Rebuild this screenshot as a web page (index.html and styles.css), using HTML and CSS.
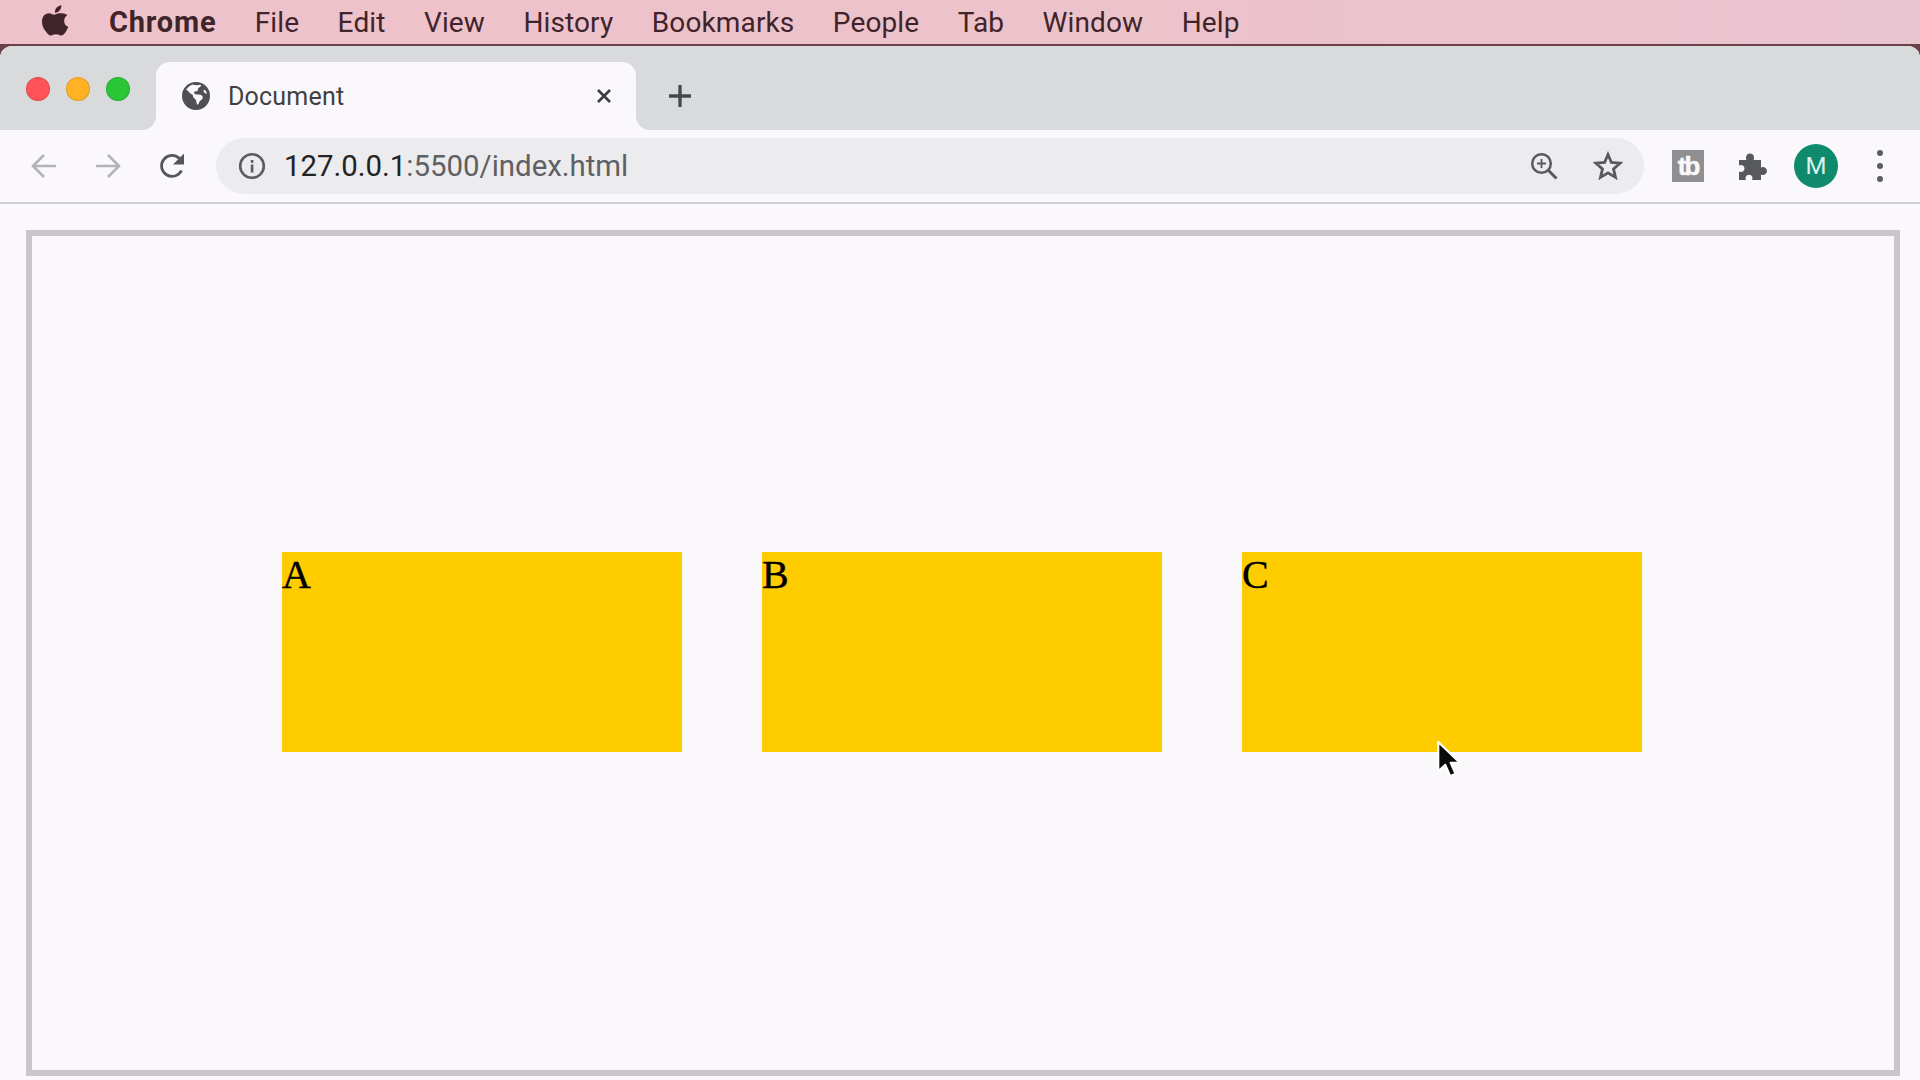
FILE: index.html
```html
<!DOCTYPE html>
<html lang="en">
<head>
<meta charset="utf-8">
<title>Document</title>
<link rel="stylesheet" href="styles.css">
</head>
<body>
<header class="menubar">
  <svg class="apple" viewBox="0 0 24 28" width="27" height="32" preserveAspectRatio="none" aria-hidden="true"><path d="M17.2 1c.1 2-.6 3.5-1.6 4.700-1 1.200-2.600 2.100-4.100 2-.2-1.800.6-3.500 1.600-4.600C14.200 1.900 15.800 1.100 17.200 1zM22.500 9.900c-1.700 1.100-2.800 2.800-2.800 4.900 0 2.500 1.500 4.300 3.600 5.200-.5 1.500-1.200 2.900-2.100 4.200-1.300 1.800-2.500 3.300-4.300 3.300-1.700 0-2.300-1-4.500-1-2.200 0-2.900 1-4.500 1-1.800.1-3.200-1.700-4.400-3.500C1 21.500 0 18.400 0 15.500c0-4.800 3.100-7.300 6.200-7.300 1.800 0 3.300 1.200 4.400 1.200 1.100 0 2.800-1.300 4.900-1.300 2.700 0 5.300 0 7 1.800z"/></svg>
  <nav class="menus">
    <span class="menu menu-app">Chrome</span>
    <span class="menu">File</span>
    <span class="menu">Edit</span>
    <span class="menu">View</span>
    <span class="menu">History</span>
    <span class="menu">Bookmarks</span>
    <span class="menu">People</span>
    <span class="menu">Tab</span>
    <span class="menu">Window</span>
    <span class="menu">Help</span>
  </nav>
</header>

<div class="window">
  <div class="tabstrip">
    <div class="lights">
      <span class="light light-red"></span>
      <span class="light light-yellow"></span>
      <span class="light light-green"></span>
    </div>
    <div class="tab">
      <svg class="globe" viewBox="0 0 28 28" width="28" height="28" aria-hidden="true">
        <circle cx="14" cy="14" r="14" fill="#4f5052"/>
        <path fill="#faf8fb" d="M10.500 2.600c2.200.8 5.800.8 8.300.2.500.9-.2 2-1.300 2.500-1 .5-1.800 1.300-1.600 2.500.1 1.100-1 1.500-2 1.500-1.200-.1-2 .7-1.800 1.800.2 1 1.200 1.500 2.200 1.400 2.100-.2 4 0 5.500 1 .8.600 1 1.700.8 2.700-.2.900-1 1.500-1.800 2-.9.600-1.500 1.500-1.800 2.600-.3 1-.8 1.800-1.800 1.900-.6-1.100-.8-2.400-1-3.700-.2-1.300-1.100-2-2-2.800-1-.9-1.500-2-1.300-3.300-1.800-.8-3.300-2-4.500-3.500-.6-.8-1.400-1.400-2.300-1.600C5 6.300 7.500 3.600 10.500 2.600z"/>
        <path fill="#faf8fb" d="M22 7.500c1.300.7 2.500 2.300 3 4-1.200.2-2.200-.2-2.900-1-.6-.8-.7-2-.1-3z"/>
      </svg>
      <span class="tab-title">Document</span>
      <svg class="tab-close" viewBox="0 0 16 16" width="16" height="16" aria-hidden="true"><path d="M2 2l12 12M14 2L2 14" stroke="#3c3d40" stroke-width="2.600" fill="none"/></svg>
    </div>
    <svg class="newtab" viewBox="0 0 22 22" width="22" height="22" aria-hidden="true"><path d="M11 0v22M0 11h22" stroke="#47484b" stroke-width="3.400" fill="none"/></svg>
  </div>

  <div class="toolbar">
    <div class="nav-buttons">
      <svg viewBox="0 0 28 28" width="28" height="28" aria-hidden="true"><path d="M26 14H3M14 3L3 14l11 11" stroke="#b3b3b5" stroke-width="2.600" fill="none"/></svg>
      <svg viewBox="0 0 28 28" width="28" height="28" aria-hidden="true"><path d="M2 14h23M14 3l11 11-11 11" stroke="#b3b3b5" stroke-width="2.600" fill="none"/></svg>
      <svg viewBox="0 0 28 28" width="28" height="28" aria-hidden="true"><path d="M23.500 18.500A10.500 10.500 0 1 1 21.500 6.500" stroke="#555659" stroke-width="2.800" fill="none"/><path d="M26 1.500v11H15z" fill="#555659"/></svg>
    </div>
    <div class="omnibox">
      <svg class="info" viewBox="0 0 28 28" width="28" height="28" aria-hidden="true"><circle cx="14" cy="14" r="11.800" stroke="#5b5c5f" stroke-width="2.600" fill="none"/><rect x="12.800" y="12.500" width="2.600" height="8" fill="#5b5c5f"/><rect x="12.800" y="8" width="2.600" height="2.800" fill="#5b5c5f"/></svg>
      <span class="url"><span class="url-host">127.0.0.1</span>:5500/index.html</span>
      <svg class="zoom" viewBox="0 0 28 28" width="28" height="28" aria-hidden="true"><circle cx="11.500" cy="11.500" r="9.300" stroke="#58595c" stroke-width="2.500" fill="none"/><path d="M18 18l8.500 8.500" stroke="#58595c" stroke-width="3" fill="none"/><path d="M11.500 7v9M7 11.500h9" stroke="#58595c" stroke-width="1.800" fill="none"/></svg>
      <svg class="star" viewBox="0 0 30 30" width="30" height="30" aria-hidden="true"><path d="M15 3.500l3.400 8 8.600.7-6.500 5.700 2 8.500L15 21.900l-7.500 4.500 2-8.500L3 12.200l8.600-.7z" stroke="#58595c" stroke-width="2.800" fill="none" stroke-linejoin="miter"/></svg>
    </div>
    <div class="extensions">
      <span class="tb"><span class="tb-text">tb</span></span>
      <svg class="puzzle" viewBox="0 0 30 30" width="30" height="30" aria-hidden="true"><path fill="#58595c" d="M1 9h7.500a4 4 0 0 1-.5-2.500C8 4 10 2.500 12 2.500s4 1.500 4 4A4 4 0 0 1 15.500 9H23v7.500a4 4 0 0 1 2-.5c2 0 4 1.700 4 4s-2 4-4 4a4 4 0 0 1-2-.5V29H14a4 4 0 0 0 .5-2c0-1.800-1.500-3.200-3.500-3.200S7.500 25.200 7.500 27a4 4 0 0 0 .5 2H1v-8.500a4 4 0 0 0 2 .5c1.900 0 3.500-1.700 3.500-3.500S4.900 14 3 14a4 4 0 0 0-2 .5z"/></svg>
      <span class="avatar">M</span>
      <svg class="kebab" viewBox="0 0 8 34" width="8" height="34" aria-hidden="true"><circle cx="4" cy="4" r="3" fill="#5b5c5f"/><circle cx="4" cy="17" r="3" fill="#5b5c5f"/><circle cx="4" cy="30" r="3" fill="#5b5c5f"/></svg>
    </div>
  </div>

  <main class="viewport">
    <section class="frame">
      <div class="box">A</div>
      <div class="box">B</div>
      <div class="box">C</div>
    </section>
  </main>
</div>

<svg class="cursor" viewBox="0 0 24 36" width="26" height="39" aria-hidden="true"><path d="M3 1v27l6.500-6 4.500 10.500 5-2.200-4.500-10.200h8.500z" fill="#0b0b0c" stroke="#fff" stroke-width="2" stroke-linejoin="round"/></svg>
</body>
</html>
```

FILE: styles.css
```css
html, body {
  margin: 0;
  height: 100%;
}

body {
  width: 1920px;
  height: 1080px;
  overflow: hidden;
  position: relative;
  display: flex;
  flex-direction: column;
  background: #6b4048;
  font-family: Roboto, "Liberation Sans", sans-serif;
}

.menubar {
  flex: 0 0 44px;
  height: 44px;
  display: flex;
  align-items: center;
  padding-left: 42px;
  background: linear-gradient(90deg, #eec2ca 0%, #ecc2cb 60%, #e8c4d0 100%);
  border-bottom: 2px solid #6b4048;
  color: #41242a;
}

.apple {
  fill: #41242a;
  flex: none;
  margin-top: -4px;
}

.menus {
  display: flex;
  align-items: center;
  gap: 38.400px;
  margin-left: 40px;
  font-size: 28px;
  letter-spacing: 0.130px;
}

.menu-app {
  font-weight: 700;
  font-size: 29px;
  letter-spacing: 0.800px;
}

.window {
  flex: 1;
  display: flex;
  flex-direction: column;
  border-radius: 12px 12px 0 0;
  overflow: hidden;
  background: #faf8fb;
}

.tabstrip {
  flex: 0 0 84px;
  height: 84px;
  display: flex;
  align-items: flex-end;
  background: #d8dadc;
}

.lights {
  display: flex;
  gap: 16px;
  width: 130px;
  padding-left: 26px;
  align-self: flex-start;
  margin-top: 31px;
}

.light {
  width: 24px;
  height: 24px;
  border-radius: 50%;
  flex: none;
  box-sizing: border-box;
  border: 1px solid rgba(0, 0, 0, 0.12);
}

.light-red { background: #ff5358; }
.light-yellow { background: #ffb224; }
.light-green { background: #2ac636; }

.tab {
  position: relative;
  width: 480px;
  height: 68px;
  box-sizing: border-box;
  display: flex;
  align-items: center;
  padding: 0 24px 0 26px;
  background: #faf8fb;
  border-radius: 14px 14px 0 0;
}

.tab::before,
.tab::after {
  content: "";
  position: absolute;
  bottom: 0;
  width: 14px;
  height: 14px;
}

.tab::before {
  left: -14px;
  background: radial-gradient(circle at 0 0, #d8dadc 13.5px, #faf8fb 14.5px);
}

.tab::after {
  right: -14px;
  background: radial-gradient(circle at 100% 0, #d8dadc 13.5px, #faf8fb 14.5px);
}

.globe { flex: none; }

.tab-title {
  flex: 1;
  margin-left: 18px;
  font-size: 25px;
  letter-spacing: 0.2px;
  color: #3f4043;
}

.tab-close { flex: none; }

.newtab {
  align-self: center;
  margin: 16px 0 0 33px;
  flex: none;
}

.toolbar {
  flex: 0 0 74px;
  height: 74px;
  box-sizing: border-box;
  display: flex;
  align-items: center;
  border-bottom: 2px solid #d2d1d4;
}

.nav-buttons {
  display: flex;
  gap: 36px;
  padding-left: 30px;
  width: 216px;
  box-sizing: border-box;
  flex: none;
}

.omnibox {
  width: 1428px;
  height: 56px;
  box-sizing: border-box;
  flex: none;
  display: flex;
  align-items: center;
  padding: 0 21px 0 22px;
  border-radius: 28px;
  background: #ecebed;
}

.info { flex: none; }

.url {
  flex: 1;
  margin-left: 18px;
  font-size: 29.400px;
  color: #5f6063;
}

.url-host { color: #222325; }

.zoom { flex: none; margin-right: 35px; }
.star { flex: none; }

.extensions {
  display: flex;
  align-items: center;
  margin-left: 28px;
  flex: none;
}

.tb {
  width: 32px;
  height: 32px;
  flex: none;
  display: flex;
  align-items: center;
  justify-content: center;
  background: #8f8e90;
}

.tb-text {
  font-family: "Liberation Sans", sans-serif;
  font-weight: 700;
  font-size: 26px;
  letter-spacing: -2px;
  line-height: 1;
  color: #faf8fb;
  -webkit-text-stroke: 0.5px #faf8fb;
}

.puzzle { flex: none; margin-left: 34px; }

.avatar {
  width: 44px;
  height: 44px;
  flex: none;
  margin-left: 26px;
  border-radius: 50%;
  display: flex;
  align-items: center;
  justify-content: center;
  background: #0f8a6d;
  color: #d9f2ec;
  font-size: 24px;
}

.kebab { flex: none; margin-left: 38px; }

.viewport {
  flex: 1;
  padding: 26px 20px 4px 26px;
  box-sizing: border-box;
  display: flex;
  min-height: 0;
}

.frame {
  flex: 1;
  box-sizing: border-box;
  border: 6px solid #c8c6c9;
  display: flex;
  align-items: center;
  gap: 80px;
  padding: 0 0 2px 250px;
}

.box {
  width: 400px;
  height: 200px;
  flex: none;
  background: #ffcc00;
  color: #000;
  font-family: "Liberation Serif", serif;
  font-size: 40px;
  line-height: 46px;
  -webkit-text-stroke: 0.4px #000;
}

.cursor {
  position: absolute;
  left: 1435px;
  top: 741px;
}
```
